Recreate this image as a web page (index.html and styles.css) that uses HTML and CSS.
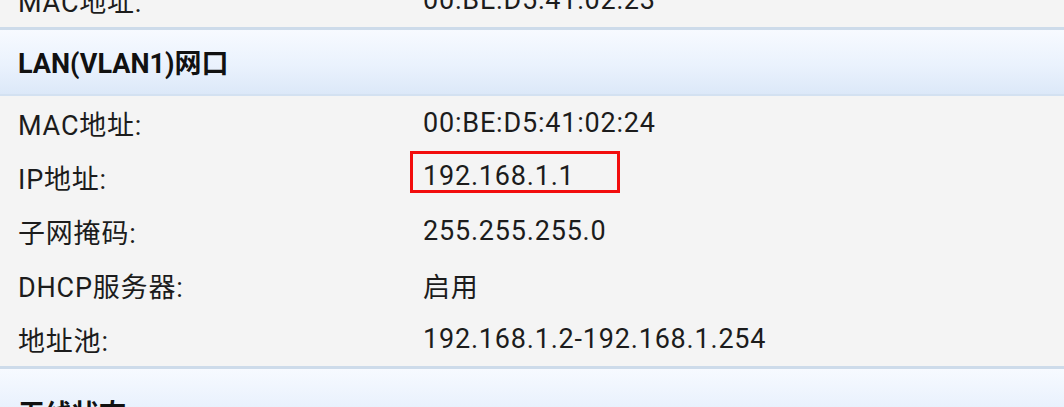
FILE: index.html
```html
<!DOCTYPE html>
<html lang="zh-CN">
<head>
  <meta charset="UTF-8" />
  <meta name="viewport" content="width=device-width, initial-scale=1.0"/>
  <title>运行状态</title>
  <link rel="stylesheet" href="styles.css">
</head>
<body>
  <div class="status">
    <div class="row first">
      <div class="label">MAC地址:</div>
      <div class="value">00:BE:D5:41:02:23</div>
    </div>

    <div class="section-title">LAN(VLAN1)网口</div>
    <div class="row">
      <div class="label">MAC地址:</div>
      <div class="value">00:BE:D5:41:02:24</div>
    </div>
    <div class="row">
      <div class="label">IP地址:</div>
      <div class="value mark">192.168.1.1</div>
    </div>
    <div class="row">
      <div class="label">子网掩码:</div>
      <div class="value">255.255.255.0</div>
    </div>
    <div class="row">
      <div class="label">DHCP服务器:</div>
      <div class="value">启用</div>
    </div>
    <div class="row">
      <div class="label">地址池:</div>
      <div class="value">192.168.1.2-192.168.1.254</div>
    </div>

    <div class="section-title next">无线状态</div>
  </div>
</body>
</html>
```

FILE: styles.css
```css
* {
  box-sizing: border-box;
}

body {
  margin: 0;
  background-color: #f4f4f4;
  color: #1c1c1c;
  font-family: Roboto, "Noto Sans CJK SC", sans-serif;
  font-size: 27px;
  overflow: hidden;
}

.status {
  margin-top: -27px;
}

.row {
  display: grid;
  grid-template-columns: 405px 1fr;
  align-items: center;
  height: 54px;
  padding-left: 18px;
  letter-spacing: 0.8px;
}

.section-title {
  height: 69px;
  padding: 0 18px 1px;
  display: flex;
  align-items: center;
  font-weight: bold;
  color: #111;
  border-top: 3px solid #cddbea;
  border-bottom: 2px solid #d3e1f1;
  background: linear-gradient(to bottom, #f7faff 0%, #eaf2fd 55%, #dce8f8 100%);
}

.section-title.next {
  padding-top: 24px;
}

.mark {
  width: fit-content;
  margin: 0 0 10px -13px;
  padding: 9px 42px 1px 10px;
  border: 3px solid #f20d0d;
  line-height: 26px;
}
```
